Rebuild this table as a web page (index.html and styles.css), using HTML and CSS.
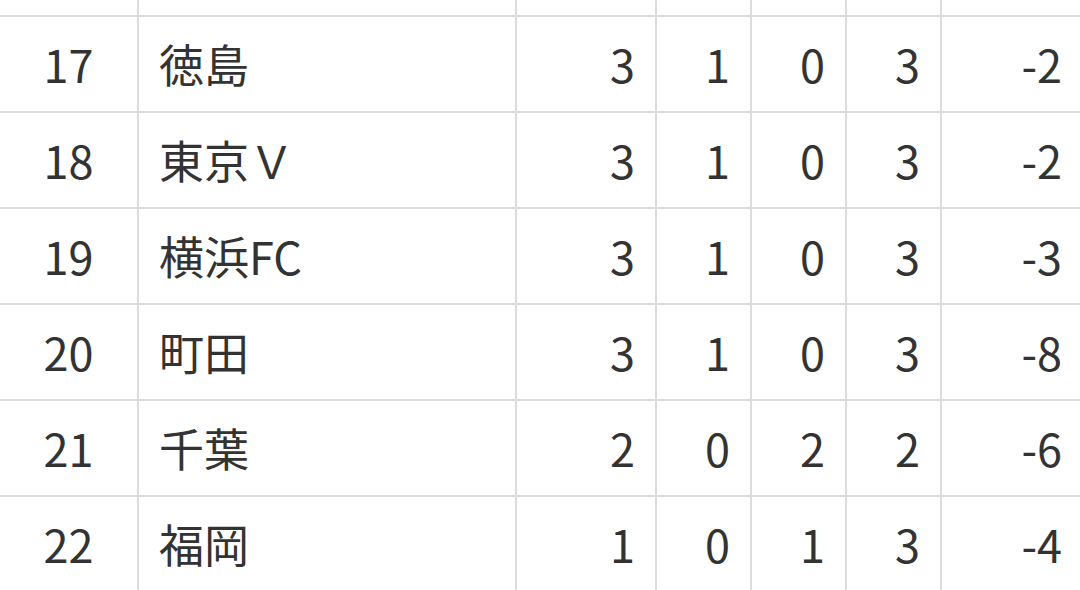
FILE: index.html
```html
<!DOCTYPE html>
<html lang="ja">
<head>
<meta charset="utf-8">
<link rel="stylesheet" href="styles.css">
</head>
<body>
<table class="standings">
  <colgroup>
    <col class="c-rank"><col class="c-team"><col class="c-wide"><col class="c-num"><col class="c-num"><col class="c-num"><col class="c-last">
  </colgroup>
  <tbody>
    <tr class="cut"><td></td><td></td><td></td><td></td><td></td><td></td><td></td></tr>
    <tr><td class="rank">17</td><td class="team">徳島</td><td class="num">3</td><td class="num">1</td><td class="num">0</td><td class="num">3</td><td class="num">-2</td></tr>
    <tr><td class="rank">18</td><td class="team">東京Ｖ</td><td class="num">3</td><td class="num">1</td><td class="num">0</td><td class="num">3</td><td class="num">-2</td></tr>
    <tr><td class="rank">19</td><td class="team">横浜FC</td><td class="num">3</td><td class="num">1</td><td class="num">0</td><td class="num">3</td><td class="num">-3</td></tr>
    <tr><td class="rank">20</td><td class="team">町田</td><td class="num">3</td><td class="num">1</td><td class="num">0</td><td class="num">3</td><td class="num">-8</td></tr>
    <tr><td class="rank">21</td><td class="team">千葉</td><td class="num">2</td><td class="num">0</td><td class="num">2</td><td class="num">2</td><td class="num">-6</td></tr>
    <tr><td class="rank">22</td><td class="team">福岡</td><td class="num">1</td><td class="num">0</td><td class="num">1</td><td class="num">3</td><td class="num">-4</td></tr>
  </tbody>
</table>
</body>
</html>
```
FILE: styles.css
```css
html, body {
  margin: 0;
  padding: 0;
  background: #fff;
  overflow: hidden;
}
body {
  width: 1080px;
  height: 590px;
}
.standings {
  border-collapse: collapse;
  table-layout: fixed;
  width: 1082px;
  font-family: "Noto Sans CJK JP", "Noto Sans", sans-serif;
  font-size: 45px;
  color: #333;
}
.c-rank { width: 138px; }
.c-team { width: 378px; }
.c-wide { width: 140px; }
.c-num { width: 95px; }
.c-last { width: 141px; }
.standings td {
  border: 2px solid #dcdcdc;
  height: 92px;
  padding: 0 20px 2px;
  vertical-align: middle;
  line-height: 1;
  white-space: nowrap;
  overflow: hidden;
}
.standings td:first-child { border-left: none; }
.standings td:last-child { border-right: none; }
.standings tr.cut td {
  height: 15px;
  border-top: none;
  padding: 0;
}
.rank { text-align: center; }
.team { text-align: left; }
.num { text-align: right; }
```
